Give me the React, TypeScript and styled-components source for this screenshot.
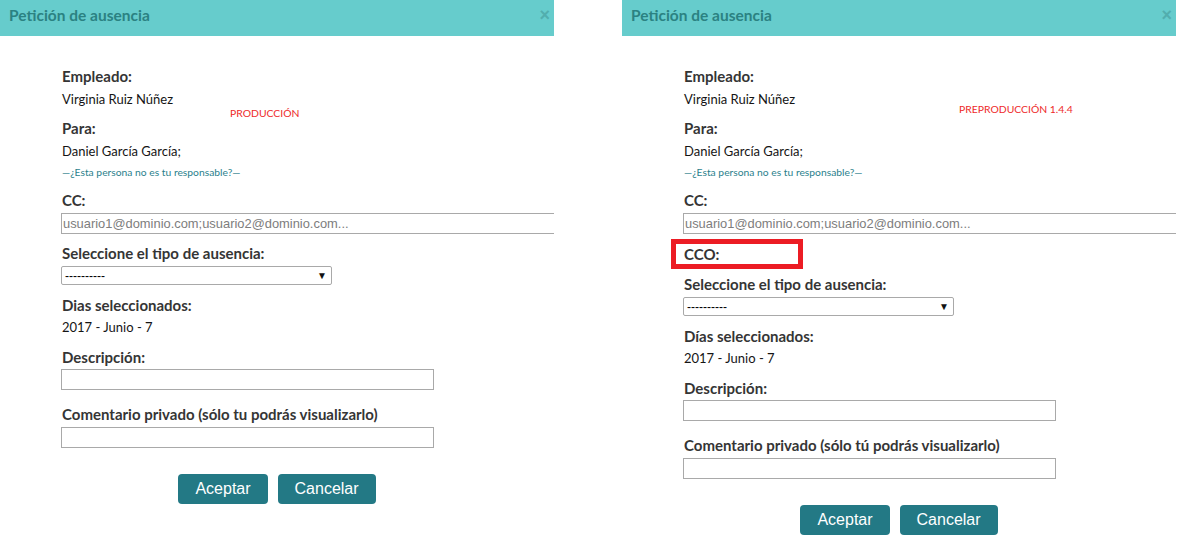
import React from "react";
import styled, { createGlobalStyle } from "styled-components";

const GlobalStyle = createGlobalStyle`
  html, body { margin: 0; padding: 0; background: #ffffff; }
  body { font-family: Lato, "Open Sans", sans-serif; }
  *, *::before, *::after { box-sizing: border-box; }
`;

const Page = styled.div`
  display: flex;
  align-items: flex-start;
  gap: 68px;
  width: 1187px;
  height: 549px;
  overflow: hidden;
`;

const Panel = styled.section`
  width: 554px;
  flex: 0 0 554px;
  overflow: hidden;
`;

const Header = styled.div`
  height: 36px;
  background: #66cccc;
  display: flex;
  align-items: center;
  justify-content: space-between;
  padding: 0 4px 6px 9px;
`;

const Title = styled.h2`
  margin: 0;
  font-family: Lato, sans-serif;
  font-weight: 700;
  font-size: 15.5px;
  color: #2b8282;
`;

const Close = styled.span`
  font-family: "Liberation Sans", Arial, sans-serif;
  font-weight: 700;
  font-size: 18px;
  line-height: 1;
  color: #52aeae;
`;

const Body = styled.div`
  position: relative;
  padding: 30px 0 40px 62px;
`;

const Label = styled.div<{ $mt?: number }>`
  margin-top: ${(p) => p.$mt ?? 0}px;
  font-family: Lato, sans-serif;
  font-weight: 700;
  font-size: 15px;
  line-height: 20px;
  color: #353535;
  white-space: nowrap;
`;

const Highlighted = styled(Label)`
  position: relative;
  width: max-content;
  &::after {
    content: "";
    position: absolute;
    left: -13px;
    top: -5px;
    width: 132px;
    height: 30px;
    border: 5px solid #ec1c24;
  }
`;

const Value = styled.div<{ $mt?: number }>`
  margin-top: ${(p) => p.$mt ?? 3}px;
  font-family: Lato, sans-serif;
  font-size: 13px;
  line-height: 20px;
  color: #151515;
`;

const Link = styled.a`
  display: block;
  margin-top: 5px;
  font-family: Lato, sans-serif;
  font-size: 10.3px;
  line-height: 12px;
  color: #2b7f8c;
  text-decoration: none;
`;

const Env = styled.div<{ $x: number; $y: number }>`
  position: absolute;
  left: ${(p) => p.$x}px;
  top: ${(p) => p.$y}px;
  font-family: Lato, sans-serif;
  font-size: 10.4px;
  line-height: 14px;
  color: #ee2a2a;
  white-space: nowrap;
`;

const TextInput = styled.input<{ $w: number; $mt?: number }>`
  display: block;
  margin-top: ${(p) => p.$mt ?? 3}px;
  margin-left: -1px;
  width: ${(p) => p.$w}px;
  height: 21px;
  padding: 0 1px;
  border: 1px solid #a9a9a9;
  border-radius: 0;
  background: #fff;
  font-family: "Liberation Sans", Arial, sans-serif;
  font-size: 12.9px;
  color: #222;
  outline: none;
  &::placeholder { color: #7d7d7d; }
`;

const Select = styled.div`
  margin-top: 3px;
  margin-left: -1px;
  width: 271px;
  height: 19px;
  border: 1px solid #a9a9a9;
  border-radius: 2px;
  display: flex;
  align-items: center;
  justify-content: space-between;
  padding: 0 4px 0 3px;
  font-family: "Liberation Sans", Arial, sans-serif;
  font-size: 12px;
  color: #000;
`;

const Arrow = styled.span`
  font-size: 10px;
  color: #111;
`;

const Buttons = styled.div`
  margin-top: 26px;
  margin-left: -62px;
  display: flex;
  justify-content: center;
  gap: 10px;
`;

const Button = styled.button`
  height: 30px;
  padding: 0 17px;
  border: none;
  border-radius: 4px;
  background: #237985;
  color: #ffffff;
  font-family: "Liberation Sans", Arial, sans-serif;
  font-size: 16px;
  cursor: pointer;
`;

type DialogProps = { env: string; envX: number; envY: number; withCco: boolean; tilde: boolean; accent: boolean };

const Dialog = ({ env, envX, envY, withCco, tilde, accent }: DialogProps) => (
  <Panel>
    <Header>
      <Title>Petición de ausencia</Title>
      <Close>×</Close>
    </Header>
    <Body>
      <Env $x={envX} $y={envY}>{env}</Env>
      <Label>Empleado:</Label>
      <Value>Virginia Ruiz Núñez</Value>
      <Label $mt={9}>Para:</Label>
      <Value>Daniel García García;</Value>
      <Link href="#">—¿Esta persona no es tu responsable?—</Link>
      <Label $mt={12}>CC:</Label>
      <TextInput $w={640} placeholder="usuario1@dominio.com;usuario2@dominio.com..." />
      {withCco && <Highlighted $mt={10}>CCO:</Highlighted>}
      <Label $mt={withCco ? 10 : 9}>Seleccione el tipo de ausencia:</Label>
      <Select>
        <span>----------</span>
        <Arrow>▼</Arrow>
      </Select>
      <Label $mt={10}>{accent ? "Días seleccionados:" : "Dias seleccionados:"}</Label>
      <Value $mt={2}>2017 - Junio - 7</Value>
      <Label $mt={10}>Descripción:</Label>
      <TextInput $w={373} $mt={2} />
      <Label $mt={14}>{tilde ? "Comentario privado (sólo tú podrás visualizarlo)" : "Comentario privado (sólo tu podrás visualizarlo)"}</Label>
      <TextInput $w={373} $mt={3} />
      <Buttons>
        <Button>Aceptar</Button>
        <Button>Cancelar</Button>
      </Buttons>
    </Body>
  </Panel>
);

export default function App() {
  return (
    <>
      <GlobalStyle />
      <Page>
        <Dialog env="PRODUCCIÓN" envX={230} envY={70} withCco={false} tilde={false} accent={false} />
        <Dialog env="PREPRODUCCIÓN 1.4.4" envX={337} envY={66} withCco={true} tilde={true} accent={true} />
      </Page>
    </>
  );
}
